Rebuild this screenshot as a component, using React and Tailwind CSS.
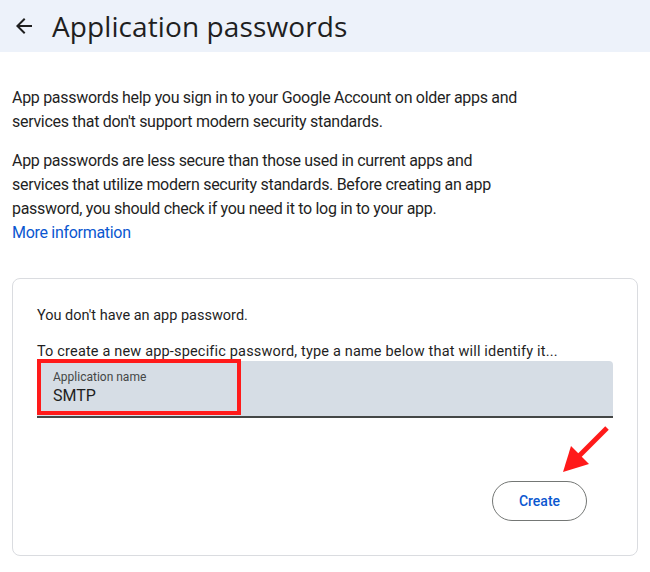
import React from 'react';

function BackArrow() {
  return (
    <svg width="24" height="24" viewBox="0 0 24 24" className="text-[#1f1f1f]">
      <path d="M20 11H7.83l5.59-5.59L12 4l-8 8 8 8 1.41-1.41L7.83 13H20v-2z" fill="currentColor" />
    </svg>
  );
}

function RedArrow() {
  return (
    <svg width="60" height="60" viewBox="0 0 60 60" className="absolute left-[556px] top-[420px]">
      <line x1="51" y1="8" x2="22" y2="37" stroke="#ff1a1a" strokeWidth="5" strokeLinecap="butt" />
      <polygon points="7,52 15,26 33,44" fill="#ff1a1a" />
    </svg>
  );
}

export default function App() {
  return (
    <div className="relative w-[650px] h-[572px] bg-white overflow-hidden font-['Roboto',sans-serif] text-[#1f1f1f]">
      <header className="h-[52px] bg-[#edf2fa] flex items-center pl-[12px]">
        <BackArrow />
        <h1 className="ml-[16px] text-[28px] leading-none font-['Open_Sans',sans-serif] tracking-[0.1px]">Application passwords</h1>
      </header>

      <div className="w-[540px] px-[12px] pt-[34px] text-[16px] leading-[24px] tracking-[-0.3px] text-[#1f1f1f]">
        <p>App passwords help you sign in to your Google Account on older apps and services that don't support modern security standards.</p>
        <p className="mt-[15px]">
          App passwords are less secure than those used in current apps and services that utilize modern security standards. Before creating an app password, you should check if you need it to log in to your app.
        </p>
        <a className="block text-[#0b57d0]">More information</a>
      </div>

      <section className="mx-[12px] mt-[33px] h-[278px] border border-[#dadce0] rounded-[8px] pl-[24px] pr-[24px] pt-[27px]">
        <p className="text-[14.5px] leading-[20px] text-[#1f1f1f]">You don't have an app password.</p>
        <p className="mt-[16px] text-[14.5px] leading-[20px] tracking-[0.17px] text-[#1f1f1f]">To create a new app-specific password, type a name below that will identify it...</p>
        <div className="mt-[-1px] h-[57px] bg-[#d6dde5] rounded-t-[4px] border-b-2 border-[#444746] flex">
          <div className="mt-[-2px] w-[204px] h-[56px] border-[4px] border-[#ff1a1a] pl-[12px] pt-[6px]">
            <div className="text-[12px] leading-[16px] text-[#444746]">Application name</div>
            <div className="text-[16px] leading-[22px] text-[#1f1f1f]">SMTP</div>
          </div>
        </div>
        <div className="flex justify-end mt-[63px] pr-[26px]">
          <button className="h-[40px] w-[95px] rounded-full border border-[#747775] text-[#0b57d0] text-[14px] font-medium">Create</button>
        </div>
      </section>

      <RedArrow />
    </div>
  );
}
